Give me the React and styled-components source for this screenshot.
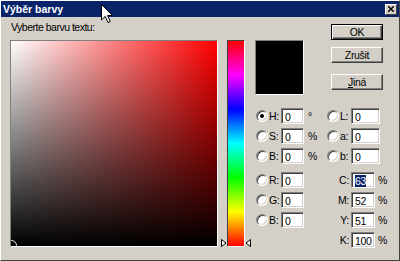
import React from "react";
import styled, { createGlobalStyle, css } from "styled-components";

const Global = createGlobalStyle`
  html, body { margin: 0; padding: 0; background: #d4d0c8; }
`;

const Window = styled.div`
  width: 400px;
  height: 261px;
  box-sizing: border-box;
  background: #d4d0c8;
  border: 1px solid;
  border-color: #ffffff #404040 #404040 #ffffff;
  position: relative;
  overflow: hidden;
  font-family: "Liberation Sans", Arial, sans-serif;
  font-size: 10.5px;
  letter-spacing: -0.3px;
  color: #000;
`;

const TitleBar = styled.div`
  height: 16px;
  background: #0a246a;
  display: flex;
  align-items: center;
  justify-content: space-between;
  padding: 0 2px 0 2px;
`;

const Title = styled.span`
  color: #fff;
  font-weight: bold;
  font-size: 10.5px;
  letter-spacing: 0;
`;

const CloseBtn = styled.div`
  width: 12px;
  height: 11px;
  box-sizing: border-box;
  background: #d4d0c8;
  border: 1px solid;
  border-color: #fff #404040 #404040 #fff;
  display: flex;
  align-items: center;
  justify-content: center;
`;

const Body = styled.div`
  display: flex;
  align-items: flex-start;
  padding: 4px 0 0 9px;
`;

const LeftCol = styled.div`
  display: flex;
  flex-direction: column;
`;

const Label = styled.div`
  height: 13px;
  line-height: 13px;
  margin-bottom: 6px;
  padding-left: 1px;
  letter-spacing: -0.5px;
`;

const sunken = css`
  box-sizing: border-box;
  border: 1px solid;
  border-color: #808080 #ffffff #ffffff #808080;
`;

const Field = styled.div`
  ${sunken};
  width: 208px;
  height: 207px;
  position: relative;
  overflow: hidden;
  background: linear-gradient(to top, #000 0%, rgba(0, 0, 0, 0) 100%),
    linear-gradient(to right, #ffffff 0%, #ff0000 100%);
`;

const Marker = styled.div`
  position: absolute;
  left: -5px;
  bottom: -5px;
  width: 11px;
  height: 11px;
  box-sizing: border-box;
  border-radius: 50%;
  border: 1px solid #e8e8e8;
`;

const HueCol = styled.div`
  margin-left: 3px;
  padding-top: 19px;
  display: flex;
`;

const TriCol = styled.div`
  width: 6px;
  height: 207px;
  display: flex;
  align-items: flex-end;
  justify-content: center;
  box-sizing: border-box;
`;

const Strip = styled.div`
  ${sunken};
  border-color: #404040 #ffffff #ffffff #404040;
  width: 18px;
  height: 207px;
  background: linear-gradient(
    to bottom,
    #ff0000 0%,
    #ff00ff 16.6%,
    #0000ff 33.3%,
    #00ffff 50%,
    #00ff00 66.6%,
    #ffff00 83.3%,
    #ff0000 100%
  );
`;

const RightCol = styled.div`
  margin-left: 4px;
  padding-top: 3px;
  display: flex;
  flex-direction: column;
`;

const TopRow = styled.div`
  display: flex;
  align-items: flex-start;
`;

const Swatch = styled.div`
  ${sunken};
  width: 49px;
  height: 55px;
  margin-top: 16px;
  background: #000;
`;

const ButtonCol = styled.div`
  margin-left: 27px;
  width: 52px;
  display: flex;
  flex-direction: column;
`;

const Button = styled.div`
  height: 16px;
  box-sizing: border-box;
  margin-top: ${(p) => p.$gap || 0}px;
  background: #d4d0c8;
  border: 1px solid;
  border-color: #ffffff #404040 #404040 #ffffff;
  box-shadow: inset -1px -1px #808080;
  display: flex;
  align-items: center;
  justify-content: center;
  line-height: 12px;
  ${(p) =>
    p.$default &&
    css`
      border-color: #000;
      box-shadow: inset 1px 1px #ffffff, inset -1px -1px #404040,
        inset -2px -2px #808080;
    `}
`;

const Key = styled.span`
  text-decoration: underline;
`;

const Fields = styled.div`
  margin-top: 13px;
  margin-left: 1px;
  display: flex;
`;

const FieldCol = styled.div`
  width: ${(p) => p.$w}px;
  display: flex;
  flex-direction: column;
`;

const Group = styled.div`
  display: flex;
  flex-direction: column;
  gap: 4px;
  margin-top: ${(p) => p.$mt || 0}px;
`;

const Row = styled.div`
  display: flex;
  align-items: center;
  height: 16px;
`;

const Radio = styled.span`
  width: 12px;
  height: 12px;
  flex: none;
  box-sizing: border-box;
  border-radius: 50%;
  background: #fff;
  border: 1px solid;
  border-color: #808080 #ffffff #ffffff #808080;
  box-shadow: inset 1px 1px #404040, inset -1px -1px #d4d0c8;
  position: relative;
  ${(p) =>
    p.$checked &&
    css`
      &::after {
        content: "";
        position: absolute;
        left: 3px;
        top: 3px;
        width: 4px;
        height: 4px;
        border-radius: 50%;
        background: #000;
      }
    `}
`;

const RowLabel = styled.span`
  width: ${(p) => p.$w}px;
  box-sizing: border-box;
  text-align: ${(p) => p.$align || "left"};
  padding-left: ${(p) => (p.$align === "right" ? 0 : 1)}px;
  padding-right: ${(p) => (p.$align === "right" ? 2 : 0)}px;
  line-height: 12px;
`;

const Input = styled.div`
  width: ${(p) => p.$w}px;
  height: 16px;
  box-sizing: border-box;
  background: #fff;
  border: 1px solid;
  border-color: #808080 #ffffff #ffffff #808080;
  box-shadow: inset 1px 1px #404040, inset -1px -1px #d4d0c8;
  padding: 2px 0 0 3px;
  line-height: 12px;
  white-space: nowrap;
`;

const Selected = styled.span`
  background: #0a246a;
  color: #fff;
`;

const Unit = styled.span`
  margin-left: ${(p) => p.$ml || 4}px;
  line-height: 12px;
`;

const Cursor = styled.svg`
  position: absolute;
  left: 100px;
  top: 3px;
`;

const LeftRow = ({ label, value, unit, checked }) => (
  <Row>
    <Radio $checked={checked} />
    <RowLabel $w={13}>{label}</RowLabel>
    <Input $w={23}>{value}</Input>
    {unit && <Unit>{unit}</Unit>}
  </Row>
);

const LabRow = ({ label, value }) => (
  <Row>
    <Radio />
    <RowLabel $w={12}>{label}</RowLabel>
    <Input $w={29}>{value}</Input>
  </Row>
);

const CmykRow = ({ label, children }) => (
  <Row>
    <RowLabel $w={24} $align="right">
      {label}
    </RowLabel>
    <Input $w={24}>{children}</Input>
    <Unit $ml={3}>%</Unit>
  </Row>
);

const Triangle = ({ dir }) => (
  <svg width="6" height="8" viewBox="0 0 6 8">
    {dir === "right" ? (
      <path d="M0.5 0.5 L5 4 L0.5 7.5 Z" fill="#fff" stroke="#000" strokeWidth="1" />
    ) : (
      <path d="M5.5 0.5 L1 4 L5.5 7.5 Z" fill="#fff" stroke="#000" strokeWidth="1" />
    )}
  </svg>
);

export default function App() {
  return (
    <>
      <Global />
      <Window>
        <TitleBar>
          <Title>Výběr barvy</Title>
          <CloseBtn>
            <svg width="6" height="6" viewBox="0 0 6 6">
              <path d="M0 0 L6 6 M6 0 L0 6" stroke="#000" strokeWidth="1.4" />
            </svg>
          </CloseBtn>
        </TitleBar>
        <Body>
          <LeftCol>
            <Label>Vyberte barvu textu:</Label>
            <Field>
              <Marker />
            </Field>
          </LeftCol>
          <HueCol>
            <TriCol>
              <Triangle dir="right" />
            </TriCol>
            <Strip />
            <TriCol>
              <Triangle dir="left" />
            </TriCol>
          </HueCol>
          <RightCol>
            <TopRow>
              <Swatch />
              <ButtonCol>
                <Button $default>OK</Button>
                <Button $gap={7}>Zrušit</Button>
                <Button $gap={11}>
                  <span>
                    <Key>J</Key>iná
                  </span>
                </Button>
              </ButtonCol>
            </TopRow>
            <Fields>
              <FieldCol $w={71}>
                <Group>
                  <LeftRow label="H:" value="0" unit="°" checked />
                  <LeftRow label="S:" value="0" unit="%" />
                  <LeftRow label="B:" value="0" unit="%" />
                </Group>
                <Group $mt={8}>
                  <LeftRow label="R:" value="0" />
                  <LeftRow label="G:" value="0" />
                  <LeftRow label="B:" value="0" />
                </Group>
              </FieldCol>
              <FieldCol $w={62}>
                <Group>
                  <LabRow label="L:" value="0" />
                  <LabRow label="a:" value="0" />
                  <LabRow label="b:" value="0" />
                </Group>
                <Group $mt={8}>
                  <CmykRow label="C:">
                    <Selected>63</Selected>
                  </CmykRow>
                  <CmykRow label="M:">52</CmykRow>
                  <CmykRow label="Y:">51</CmykRow>
                  <CmykRow label="K:">100</CmykRow>
                </Group>
              </FieldCol>
            </Fields>
          </RightCol>
        </Body>
        <Cursor width="13" height="20" viewBox="0 0 13 20">
          <path
            d="M0.5 0.5 L0.5 16 L4.2 12.4 L7 18.6 L9.3 17.6 L6.6 11.5 L11.6 11.5 Z"
            fill="#fff"
            stroke="#000"
            strokeWidth="1"
            strokeLinejoin="miter"
          />
        </Cursor>
      </Window>
    </>
  );
}
